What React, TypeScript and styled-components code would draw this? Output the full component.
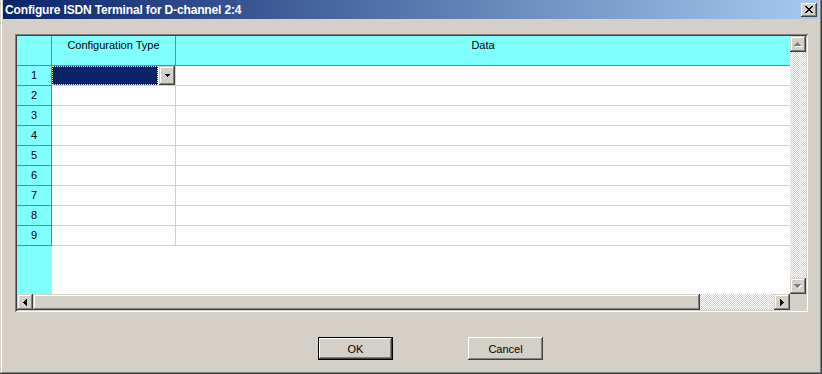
import React from "react";
import styled, { createGlobalStyle } from "styled-components";

const Global = createGlobalStyle`
  html, body { margin: 0; padding: 0; background: #D4D0C8; }
  body { font-family: "Liberation Sans", Arial, sans-serif; font-size: 11px; color: #000; }
  * { box-sizing: border-box; }
`;

const raised = `box-shadow: inset -1px -1px #404040, inset 1px 1px #D4D0C8, inset -2px -2px #808080, inset 2px 2px #fff;`;
const buttonRaised = `box-shadow: inset -1px -1px #404040, inset 1px 1px #fff, inset -2px -2px #808080, inset 2px 2px #D4D0C8;`;
const checker = `background: repeating-conic-gradient(#D4D0C8 0 25%, #fff 0 50%) 0 0 / 2px 2px;`;

const Window = styled.div`
  width: 822px;
  height: 374px;
  background: #D4D0C8;
  padding: 0 3px 3px 3px;
  display: flex;
  flex-direction: column;
  box-shadow: inset -1px -1px #404040, inset 1px 0 #D4D0C8, inset -2px -2px #808080, inset 2px 0 #fff;
`;

const TitleBar = styled.div`
  height: 19px;
  display: flex;
  align-items: center;
  justify-content: space-between;
  padding: 0 2px;
  background: linear-gradient(to right, #0A246A, #A6CAF0);
`;

const Title = styled.span`
  color: #fff;
  font-weight: bold;
  font-size: 12px;
  letter-spacing: -0.15px;
  white-space: nowrap;
`;

const CloseButton = styled.div`
  width: 16px;
  height: 14px;
  background: #D4D0C8;
  display: flex;
  align-items: center;
  justify-content: center;
  ${buttonRaised}
`;

const Body = styled.div`
  flex: 1;
  display: flex;
  flex-direction: column;
  padding: 15px 0 0 12px;
`;

const GridFrame = styled.div`
  width: 793px;
  height: 278px;
  padding: 2px;
  background: #D4D0C8;
  display: grid;
  grid-template-columns: 1fr 16px;
  grid-template-rows: 1fr 16px;
  box-shadow: inset 1px 1px #808080, inset -1px -1px #fff, inset 2px 2px #404040, inset -2px -2px #D4D0C8;
`;

const Table = styled.div`
  display: grid;
  grid-template-columns: 35px 124px 1fr;
  grid-template-rows: 30px repeat(9, 20px) 1fr;
  background: #fff;
  overflow: hidden;
`;

const HeaderCell = styled.div<{ $last?: boolean }>`
  background: #80FFFF;
  border-bottom: 1px solid #808080;
  border-right: ${(p) => (p.$last ? "none" : "1px solid #808080")};
  text-align: center;
  padding-top: 3px;
  line-height: 13px;
  white-space: nowrap;
`;

const RowHeader = styled.div`
  background: #80FFFF;
  border-bottom: 1px solid #808080;
  border-right: 1px solid #808080;
  display: flex;
  align-items: center;
  justify-content: center;
  line-height: 13px;
`;

const DataCell = styled.div<{ $last?: boolean }>`
  background: #fff;
  border-bottom: 1px solid #D4D0C8;
  border-right: ${(p) => (p.$last ? "none" : "1px solid #D4D0C8")};
  display: flex;
  gap: 1px;
`;

const Selected = styled.div`
  width: 106px;
  height: 19px;
  background: #0A246A;
  outline: 1px dotted #F5F0B0;
  outline-offset: -1px;
`;

const DropButton = styled.div`
  width: 16px;
  height: 19px;
  background: #D4D0C8;
  display: flex;
  align-items: center;
  justify-content: center;
  ${raised}
`;

const RowHeaderFill = styled.div`
  background: #80FFFF;
`;

const DataFill = styled.div`
  grid-column: 2 / span 2;
  background: #fff;
`;

const VScroll = styled.div`
  display: flex;
  flex-direction: column;
`;

const HScroll = styled.div`
  display: flex;
`;

const ArrowButton = styled.div`
  width: 16px;
  height: 16px;
  flex: none;
  background: #D4D0C8;
  display: flex;
  align-items: center;
  justify-content: center;
  ${raised}
`;

const Track = styled.div`
  flex: 1;
  ${checker}
`;

const Thumb = styled.div`
  width: 667px;
  flex: none;
  background: #D4D0C8;
  ${raised}
`;

const Corner = styled.div`
  background: #D4D0C8;
`;

const ButtonRow = styled.div`
  display: flex;
  gap: 75px;
  padding-left: 303px;
  margin-top: 25px;
`;

const DialogButton = styled.button<{ $default?: boolean }>`
  width: 75px;
  height: 23px;
  padding: 0;
  margin: 0;
  font: inherit;
  font-size: 11px;
  color: #000;
  background: #D4D0C8;
  border: ${(p) => (p.$default ? "1px solid #000" : "none")};
  ${buttonRaised}
`;

const Px = ({ w, h, d, fill, shadow }: { w: number; h: number; d: string; fill: string; shadow?: boolean }) => (
  <svg width={w + (shadow ? 1 : 0)} height={h + (shadow ? 1 : 0)} shapeRendering="crispEdges" style={{ display: "block" }}>
    {shadow && <path d={d} fill="#fff" transform="translate(1 1)" />}
    <path d={d} fill={fill} />
  </svg>
);

const UP = "M3 0h1v1h1v1h1v1h1v1H0V3h1V2h1V1h1z";
const DOWN = "M0 0h7v1H6v1H5v1H4v1H3V3H2V2H1V1H0z";
const LEFT = "M3 0h1v7H3V6H2V5H1V4H0V3h1V2h1V1h1z";
const RIGHT = "M0 0h1v1h1v1h1v1h1v1H3v1H2v1H1v1H0z";
const SMALLDOWN = "M0 0h5v1H4v1H3v1H2V2H1V1H0z";

export default function App() {
  const rows = [1, 2, 3, 4, 5, 6, 7, 8, 9];
  return (
    <>
      <Global />
      <Window>
        <TitleBar>
          <Title>Configure ISDN Terminal for D-channel 2:4</Title>
          <CloseButton>
            <svg width="8" height="7" viewBox="0 0 8 7" shapeRendering="crispEdges" style={{ display: "block" }}>
              <path d="M0 0h2v1h1v1h2V1h1V0h2v1H7v1H6v1H5v1h1v1h1v1h1v1H6V6H5V5H3v1H2v1H0V6h1V5h1V4h1V3H2V2H1V1H0z" fill="#000" />
            </svg>
          </CloseButton>
        </TitleBar>
        <Body>
          <GridFrame>
            <Table>
              <HeaderCell />
              <HeaderCell>Configuration Type</HeaderCell>
              <HeaderCell $last>Data</HeaderCell>
              {rows.map((r) => (
                <React.Fragment key={r}>
                  <RowHeader>{r}</RowHeader>
                  <DataCell>
                    {r === 1 && (
                      <>
                        <Selected />
                        <DropButton>
                          <Px w={5} h={3} d={SMALLDOWN} fill="#000" />
                        </DropButton>
                      </>
                    )}
                  </DataCell>
                  <DataCell $last />
                </React.Fragment>
              ))}
              <RowHeaderFill />
              <DataFill />
            </Table>
            <VScroll>
              <ArrowButton>
                <Px w={7} h={4} d={UP} fill="#808080" shadow />
              </ArrowButton>
              <Track />
              <ArrowButton>
                <Px w={7} h={4} d={DOWN} fill="#808080" shadow />
              </ArrowButton>
            </VScroll>
            <HScroll>
              <ArrowButton>
                <Px w={4} h={7} d={LEFT} fill="#000" />
              </ArrowButton>
              <Thumb />
              <Track />
              <ArrowButton>
                <Px w={4} h={7} d={RIGHT} fill="#000" />
              </ArrowButton>
            </HScroll>
            <Corner />
          </GridFrame>
          <ButtonRow>
            <DialogButton $default>OK</DialogButton>
            <DialogButton>Cancel</DialogButton>
          </ButtonRow>
        </Body>
      </Window>
    </>
  );
}
